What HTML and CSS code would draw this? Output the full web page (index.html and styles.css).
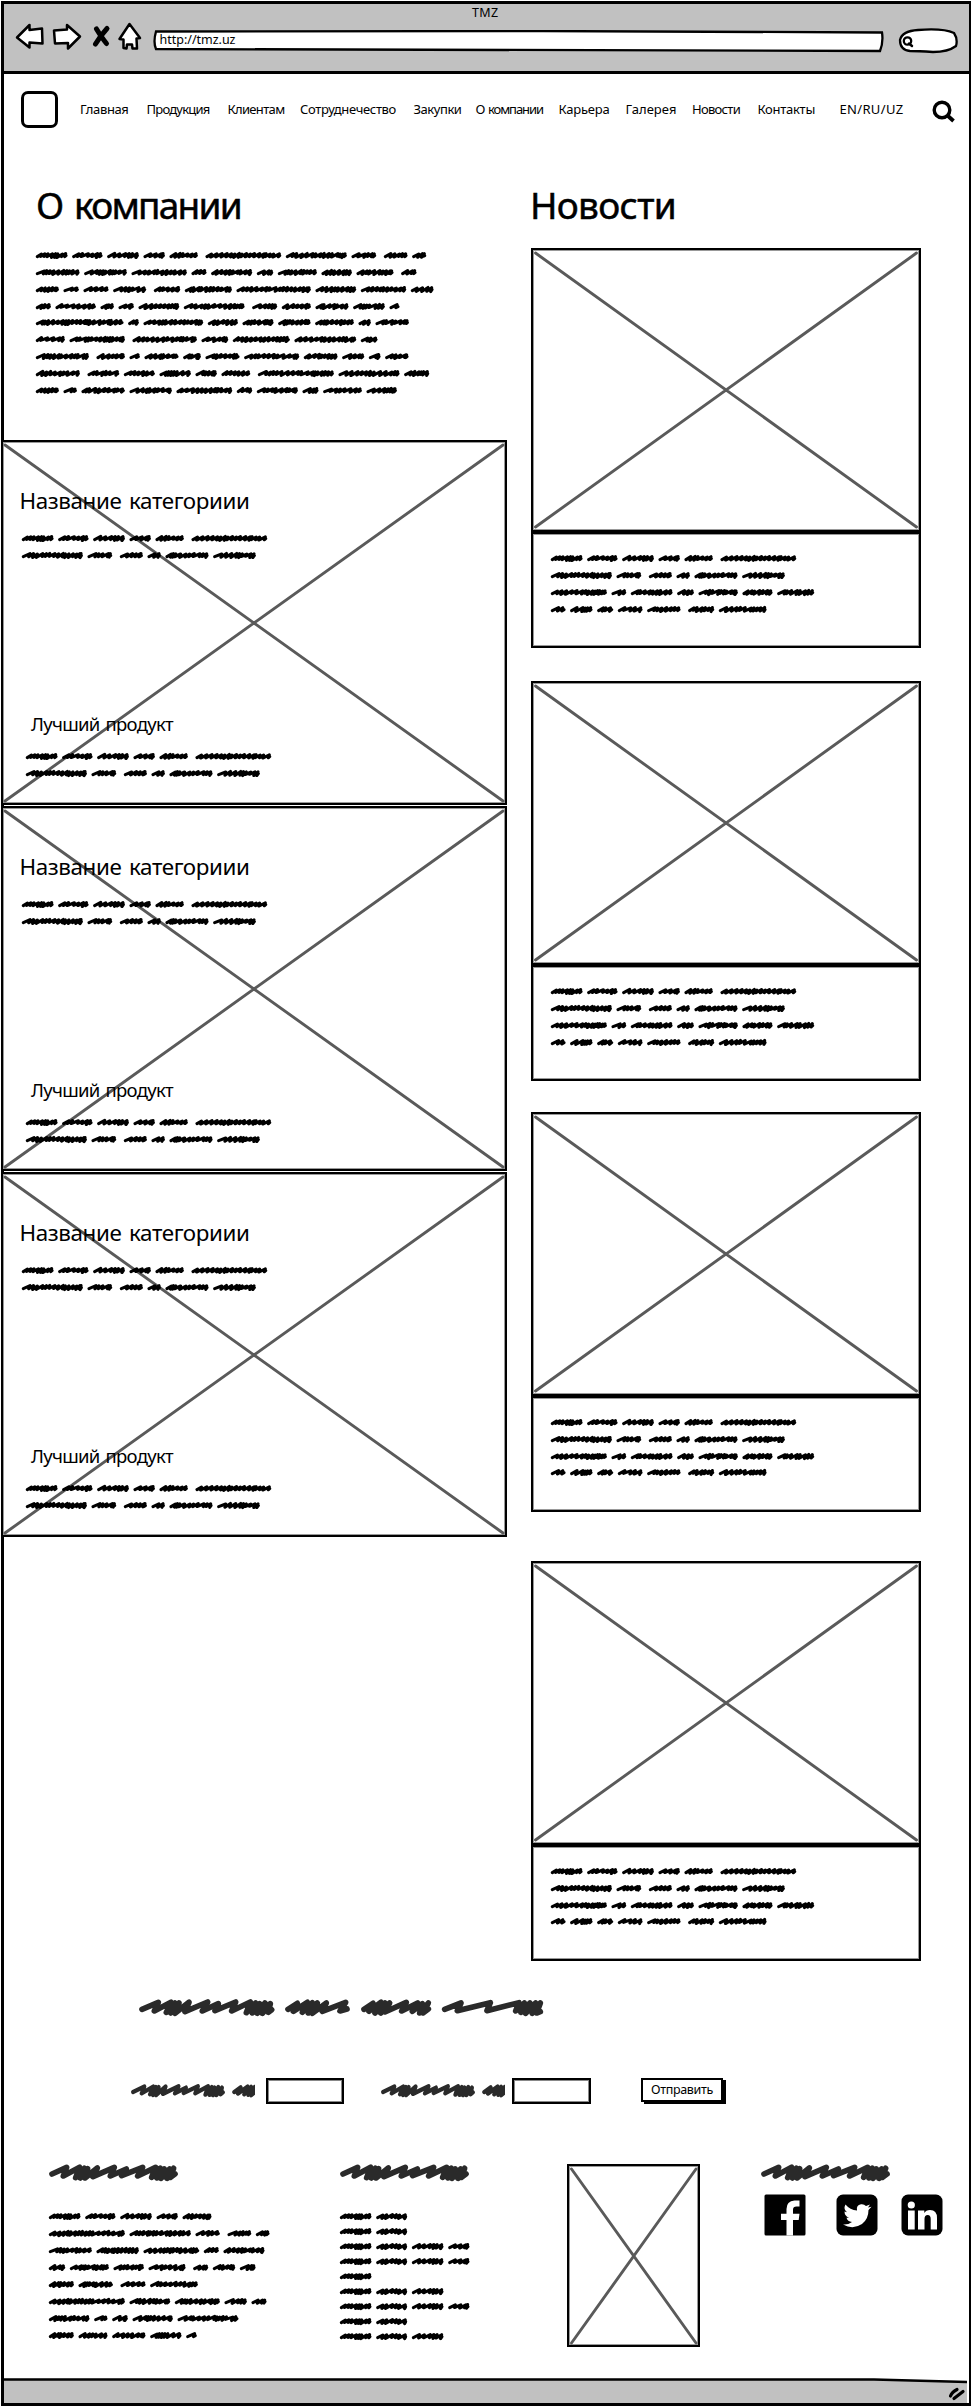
FILE: index.html
```html
<!DOCTYPE html>
<html lang="ru">
<head>
<meta charset="utf-8">
<title>TMZ</title>
<link rel="stylesheet" href="styles.css">
</head>
<body>
<svg class="defs" width="0" height="0">
  <defs>
    <path id="w1" d="M9 31L58 10L46 36L96 10L82 40L108 12L95 42L120 12L108 43L150 10L138 38L206 9L190 36L238 14L228 35L290 9L278 36L334 9L322 41L350 12L340 42L362 14L355 43L378 12L370 43L394 14L388 40L398 32"/>
    <path id="w2" d="M447 31L475 13L463 37L505 10L490 40L520 11L508 42L535 12L520 43L562 12L550 37L620 10L603 36L624 30"/>
    <path id="w3" d="M675 31L702 13L690 37L726 10L708 42L738 12L725 42L752 12L738 39L802 10L788 36L836 12L820 37L850 14L842 42L868 12L852 42L868 30"/>
    <path id="w4" d="M917 31L966 12L955 35L1054 11L1044 35L1140 11L1130 36L1156 12L1146 40L1173 12L1160 43L1190 12L1180 43L1204 12L1193 42L1204 38"/>
    <path id="head" d="M9 30L53 10L43 36L92 10L80 41L106 13L94 42L116 14L108 42L145 12L132 38L196 10L184 36L232 15L218 35L281 10L266 36L320 10L308 40L334 13L324 42L346 15L336 43L362 15L354 43L374 13L364 40L378 30"/>
  </defs>
</svg>
<div class="window">
  <header class="chrome">
    <div class="title"><span data-fit="26.5">TMZ</span></div>
    <div class="toolbar">
      <svg class="tools" width="130" height="32" viewBox="0 0 130 32">
        <g fill="#fff" stroke="#000" stroke-width="2.500" stroke-linejoin="round">
          <path d="M3 16.500L15.500 4V9L28 7.500L28.500 22.500L15.500 21.500V26.500Z"/>
          <path d="M40 9.500L53 8.500V4L66 15.500L54 27.500V22L41 22.500Z"/>
          <path d="M115.500 3L126 17L122.500 17.500L123 27.500H118.500L118 23.500H113L112.500 27.500L109.500 27V18.500L105.500 18Z"/>
        </g>
        <path d="M82.500 8Q88 17 92.500 22.500M93 7.500Q87 14 81.500 23" fill="none" stroke="#000" stroke-width="5" stroke-linecap="round"/>
      </svg>
      <div class="url">
        <svg width="731" height="23" viewBox="0 0 731 23"><path d="M3 1.500L390 1L729 2.500Q730.500 12 727 21L3 19Q0 12 3 1.500Z" fill="#fff" stroke="#000" stroke-width="2.300"/></svg>
        <span data-fit="76">http://tmz.uz</span>
      </div>
      <svg class="pill" width="61" height="26" viewBox="0 0 61 26">
        <path d="M2 12Q4 3 20 2Q45 0 56 5Q60 11 58 18Q50 24 35 24Q20 23 12 23Q2 22 2 12Z" fill="#fff" stroke="#000" stroke-width="2.300"/>
        <circle cx="9.500" cy="13" r="3.700" fill="none" stroke="#000" stroke-width="2.300"/>
        <path d="M11 15.500L14 18" stroke="#000" stroke-width="2.500" stroke-linecap="round"/>
      </svg>
    </div>
  </header>
  <nav class="nav">
    <span class="logo"></span>
    <ul class="links">
      <li><span data-fit="48.500">Главная</span></li>
      <li><span data-fit="63">Продукция</span></li>
      <li><span data-fit="57">Клиентам</span></li>
      <li><span data-fit="96">Сотруднечество</span></li>
      <li><span data-fit="48">Закупки</span></li>
      <li><span data-fit="67.500">О компании</span></li>
      <li><span data-fit="51">Карьера</span></li>
      <li><span data-fit="51">Галерея</span></li>
      <li><span data-fit="48">Новости</span></li>
      <li><span data-fit="57.500">Контакты</span></li>
      <li><span data-fit="64">EN/RU/UZ</span></li>
    </ul>
    <svg class="find" width="24" height="24" viewBox="0 0 24 24"><circle cx="10" cy="10" r="7.800" fill="none" stroke="#000" stroke-width="3.400"/><path d="M15.500 15.500L21.500 21" stroke="#000" stroke-width="3.800"/></svg>
  </nav>
  <main class="main">
    <div class="left">
      <section class="about">
        <h1><span data-fit="205">О компании</span></h1>
        <div class="scribble" data-lines="94 90 94 63 84 >226 182 73 >70 41|130 127 165 44 122 48 116 90 110 >45|68 45 74 98 >78 140 222 121 135 67|44 120 39 45 121 181 >74 86 98 94 29|262 31 178 89 92 96 115 36 99|86 165 >192 79 170 184 49|158 >84 30 101 52 101 164 100 65 34 69|131 >94 92 93 63 85 >227 182 74|68 39 129 126 166 45 122 47 115 90"></div>
      </section>
      <section class="panel">
        <svg class="cross" width="506" height="365" viewBox="0 0 506 365"><path d="M4 5L502 361M502 5L4 361"/></svg>
        <h2><span data-fit="230">Название категориии</span></h2>
        <div class="scribble cat" data-lines="94 90 94 63 84 >226|182 73 >68 39 128 127"></div>
        <h3><span data-fit="142">Лучший продукт</span></h3>
        <div class="scribble prod" data-lines="94 90 94 63 84 >226|182 73 >68 39 128 127"></div>
      </section>
      <section class="panel">
        <svg class="cross" width="506" height="365" viewBox="0 0 506 365"><path d="M4 5L502 361M502 5L4 361"/></svg>
        <h2><span data-fit="230">Название категориии</span></h2>
        <div class="scribble cat" data-lines="94 90 94 63 84 >226|182 73 >68 39 128 127"></div>
        <h3><span data-fit="142">Лучший продукт</span></h3>
        <div class="scribble prod" data-lines="94 90 94 63 84 >226|182 73 >68 39 128 127"></div>
      </section>
      <section class="panel">
        <svg class="cross" width="506" height="365" viewBox="0 0 506 365"><path d="M4 5L502 361M502 5L4 361"/></svg>
        <h2><span data-fit="230">Название категориии</span></h2>
        <div class="scribble cat" data-lines="94 90 94 63 84 >226|182 73 >68 39 128 127"></div>
        <h3><span data-fit="142">Лучший продукт</span></h3>
        <div class="scribble prod" data-lines="94 90 94 63 84 >226|182 73 >68 39 128 127"></div>
      </section>
    </div>
    <div class="news">
      <h1><span data-fit="146">Новости</span></h1>
      <article class="card">
        <div class="picture"><svg width="390" height="284" viewBox="0 0 390 284"><path d="M4.500 5L385.500 279M385.500 5L4.500 279"/></svg></div>
        <div class="note"><div class="scribble" data-lines="94 90 94 63 84 >226|182 73 >68 39 128 127|167 43 124 49 117 89 110|43 66 47 73 99 >77 142"></div></div>
      </article>
      <article class="card second">
        <div class="picture"><svg width="390" height="284" viewBox="0 0 390 284"><path d="M4.500 5L385.500 279M385.500 5L4.500 279"/></svg></div>
        <div class="note"><div class="scribble" data-lines="94 90 94 63 84 >226|182 73 >68 39 128 127|167 43 124 49 117 89 110|43 66 47 73 99 >77 142"></div></div>
      </article>
      <article class="card third">
        <div class="picture"><svg width="390" height="284" viewBox="0 0 390 284"><path d="M4.500 5L385.500 279M385.500 5L4.500 279"/></svg></div>
        <div class="note"><div class="scribble" data-lines="94 90 94 63 84 >226|182 73 >68 39 128 127|167 43 124 49 117 89 110|43 66 47 73 99 >77 142"></div></div>
      </article>
      <article class="card fourth">
        <div class="picture"><svg width="390" height="284" viewBox="0 0 390 284"><path d="M4.500 5L385.500 279M385.500 5L4.500 279"/></svg></div>
        <div class="note"><div class="scribble" data-lines="94 90 94 63 84 >226|182 73 >68 39 128 127|167 43 124 49 117 89 110|43 66 47 73 99 >77 142"></div></div>
      </article>
    </div>
  </main>
  <section class="subscribe">
    <svg class="marker" width="404" height="18" viewBox="0 0 1212 54"><use href="#w1"/><use href="#w2"/><use href="#w3"/><use href="#w4"/></svg>
    <form class="form">
      <svg class="marker" width="124" height="14" viewBox="0 0 537 54" preserveAspectRatio="none"><use href="#w1"/><use href="#w2"/></svg>
      <span class="input"></span>
      <svg class="marker label2" width="124" height="14" viewBox="0 0 537 54" preserveAspectRatio="none"><use href="#w1"/><use href="#w2"/></svg>
      <span class="input input2"></span>
      <button class="send" type="button"><span data-fit="62">Отправить</span></button>
    </form>
  </section>
  <footer class="footer">
    <div>
      <svg class="marker" width="130" height="18" viewBox="0 0 390 54"><use href="#head"/></svg>
      <div class="scribble" data-lines="94 90 94 63 86|227 183 72 >70 40|128 126 166 44 122|48 116 90 110 >44 66 46|74 102 >74 142|227 121 134 66 44|121 39 46 120 182|74 86 99 93 31"></div>
    </div>
    <div>
      <svg class="marker" width="130" height="18" viewBox="0 0 390 54"><use href="#head"/></svg>
      <div class="scribble tight" data-lines="94 92|94 92|94 92 94 63|94 92 94 63|94|94 92 94|94 92 94 63|94 92|94 92 94"></div>
    </div>
    <div class="poster"><svg width="133" height="183" viewBox="0 0 133 183"><path d="M4.500 5L129 179M129 5L4.500 179"/></svg></div>
    <div>
      <svg class="marker" width="130" height="18" viewBox="0 0 390 54"><use href="#head"/></svg>
      <div class="social">
        <svg width="42" height="42" viewBox="0 0 42 42"><rect x=".5" y=".5" width="41" height="41" rx="1.500"/><path fill="#fff" d="M22.500 41.500V26H17V19.800H22.500V15Q22.500 7 30.500 6.500H35.500V12.500H32.500Q29 12.500 29 15.800V19.800H35.500L34.700 26H29V41.500Z"/></svg>
        <svg width="42" height="42" viewBox="0 0 42 42"><rect x=".5" y=".5" width="41" height="41" rx="6.500"/><path fill="#fff" d="M7 30.500Q12 31 16 28Q11.500 27.500 10.500 23.800H13Q8.500 22 8.500 17.500L11 18.200Q7 15 9.500 10.500Q14 16 21 16.500Q20 11 25 10.200Q28 9.800 30 12L34 10.500L32 13.500L35.500 12.800L32.500 16Q32.500 25 26 30Q17 36 7 30.500Z"/></svg>
        <svg width="42" height="42" viewBox="0 0 42 42"><rect x=".5" y=".5" width="41" height="41" rx="6.500"/><circle cx="10.300" cy="11" r="3.600" fill="#fff"/><path fill="#fff" d="M7 16.500H13.700V35.500H7ZM17 16.500H23.300V19Q25 16 29 16Q36 16 36 24V35.500H29.700V25Q29.700 21 26.700 21Q23.500 21 23.500 25V35.500H17Z"/></svg>
      </div>
    </div>
  </footer>
  <div class="status">
    <svg width="963" height="26" viewBox="0 0 963 26"><path d="M0 1.500L700 1L870 1.500L964 4V26H0Z" fill="#c1c1c1"/><path d="M0 1.500L700 1.500L870 1.500L964 4" fill="none" stroke="#000" stroke-width="2.500"/><path d="M946.500 18Q948 14 953 11.500M950 20.500L959 13.500" fill="none" stroke="#000" stroke-width="3.200" stroke-linecap="round"/></svg>
  </div>
</div>
<script src="sketch.js"></script>
</body>
</html>
```

FILE: styles.css
```css
* { box-sizing: border-box; }
body {
  margin: 0;
  width: 971px;
  height: 2407px;
  background: #fff;
  color: #000;
  font-family: "Noto Sans", "Open Sans", sans-serif;
  overflow: hidden;
}
svg { display: block; flex: none; }
h1, h2, h3, ul { margin: 0; padding: 0; }
[data-fit] { display: inline-block; white-space: nowrap; word-spacing: .1em; }
.defs { position: absolute; }
.window {
  width: 969.5px;
  height: 2405px;
  margin: 1px 0 0 1px;
  border: 3px solid #000;
  border-right-width: 2.5px;
  display: flow-root;
}
.chrome { height: 70px; background: #c1c1c1; border-bottom: 3px solid #000; }
.title { height: 17px; line-height: 17px; font-size: 12.5px; padding-left: 468px; }
.toolbar { display: flex; align-items: flex-start; }
.tools { margin: 0 0 0 10px; }
.url { display: grid; margin: 9px 0 0 9px; width: 731px; }
.url > * { grid-area: 1 / 1; }
.url span { font-size: 12.5px; line-height: 20px; padding-left: 6.5px; justify-self: start; }
.pill { margin: 7px 0 0 14px; }

.nav { height: 70px; display: flex; align-items: center; }
.logo { width: 37px; height: 37px; border: 3px solid #000; border-radius: 7px; margin-left: 17px; }
.links {
  list-style: none;
  display: grid;
  grid-template-columns: 66.5px 81px 72.5px 113.5px 62px 83px 67px 66.5px 65.5px 82px 64px;
  width: 824px;
  margin-left: 22px;
  font-size: 13px;
  line-height: 20px;
}
.find { margin: 5px 0 0 28px; }

.main { display: grid; grid-template-columns: 507px 390px; column-gap: 23px; height: 1817.3px; margin-left: -3px; }
h1 { font-size: 37px; line-height: 50px; font-weight: 400; -webkit-text-stroke: .5px #000; height: 50px; }
.about { height: 296px; padding: 35.6px 0 0 35px; }
.about .scribble { margin-top: 17.2px; }
.news { padding-top: 35.6px; }
.news h1 { margin-left: -1px; height: 68.7px; }

.panel {
  position: relative;
  width: 506px;
  height: 365px;
  margin-bottom: 1px;
  border: 2px solid #000;
  box-shadow: inset 0 0 0 1px #999;
  padding-top: 44.2px;
}
.cross { position: absolute; left: -2px; top: -2px; }
.cross path, .picture path, .poster path { fill: none; stroke: #5a5a5a; stroke-width: 2.9; stroke-linecap: round; }
.panel h2, .panel h3, .panel .scribble { position: relative; }
h2 { font-size: 22.4px; line-height: 30px; font-weight: 400; padding-left: 16.5px; height: 30px; }
h3 { font-size: 18.5px; line-height: 26px; font-weight: 400; padding-left: 28px; margin-top: 147.8px; height: 26px; }
.cat { margin: 13.7px 0 0 19.4px; }
.prod { margin: 10.7px 0 0 23.4px; }

.card { height: 400px; }
.second { margin-top: 33.2px; }
.third { margin-top: 30.8px; }
.fourth { margin-top: 49px; }
.picture { height: 284px; border: 2px solid #000; box-shadow: inset 0 0 0 1px #999; }
.picture svg { margin: -2px; }
.note { height: 116px; border: 2px solid #000; box-shadow: inset 0 0 0 1px #999; padding: 15.5px 0 0 17.5px; }

.scribble svg { height: 16.92px; overflow: visible; fill: none; stroke: #000; stroke-width: 9.2; stroke-linecap: round; stroke-linejoin: round; }
.scribble.tight svg { height: 15px; }
.marker { overflow: visible; fill: none; stroke: #2a2a2a; stroke-width: 17; stroke-linecap: round; stroke-linejoin: round; }

.subscribe { padding: 38px 0 0 134.5px; height: 202.7px; }
.form { display: flex; align-items: center; margin: 60px 0 0 -8px; height: 27px; }
.form .marker { overflow: hidden; }
.input { width: 78.5px; height: 26.5px; border: 2px solid #000; box-shadow: inset 0 0 0 1px #888; margin-left: 11px; }
.label2 { margin-left: 37px; }
.input2 { margin-left: 7px; }
.send {
  width: 82px; height: 24px; margin: -1px 0 0 50.5px; padding: 0;
  border: 2px solid #000; background: #fff; color: #000; box-shadow: 3px 2px 0 #000;
  font: 12.5px/18px "Noto Sans", sans-serif;
}

.footer { display: grid; grid-template-columns: 291px 227px 194px 190px; padding-left: 44.5px; height: 214.5px; }
.footer .scribble { margin: 26.5px 0 0 .5px; }
.footer .scribble.tight { margin-top: 27.5px; }
.poster { width: 133px; height: 183px; border: 2px solid #000; box-shadow: inset 0 0 0 1px #999; margin-top: .5px; }
.poster svg { margin: -2px; }
.social { display: flex; margin: 12.5px 0 0 3px; }
.social svg + svg { margin-left: 30px; }
.social svg + svg + svg { margin-left: 23px; }
.status { height: 24.5px; overflow: hidden; }
```

FILE: sketch.js
```js
// Draws the hand-scribbled placeholder copy. Each number is a word's width in
// thirds of a pixel; ">" marks the wider gap after a sentence.
function wordPath(x0, width, seed) {
  var s = seed * 7919 + Math.round(width) * 104729;
  function rnd() { s = (s * 1103515245 + 12345) % 2147483648; return s / 2147483648; }
  var end = x0 + width - 4;
  var x = x0 + 4;
  var d = 'M' + x + ' 29';
  while (x < end - 7) {
    var reach = 12 + rnd() * 10;
    var top = Math.min(x + reach, end - 1);
    d += 'L' + top.toFixed(1) + ' ' + (19.5 + rnd() * 2).toFixed(1);
    x = Math.min(top - 4 + rnd() * 2, end);
    d += 'L' + x.toFixed(1) + ' ' + (28 + rnd() * 4).toFixed(1);
    if (rnd() < .5) x -= 3;
  }
  return d + 'L' + end + ' 26';
}
document.querySelectorAll('.scribble').forEach(function (box) {
  box.innerHTML = box.dataset.lines.split('|').map(function (line) {
    var x = 0, d = '';
    line.split(' ').forEach(function (word, i) {
      var wide = word[0] === '>';
      var w = Number(word.replace('>', ''));
      if (i) x += wide ? 24 : 15;
      d += wordPath(x, w, i + 1);
      x += w;
    });
    var width = Math.ceil(x / 3);
    return '<svg width="' + width + '" viewBox="0 0 ' + width * 3 + ' 51" preserveAspectRatio="xMinYMid slice"><path d="' + d + '"/></svg>';
  }).join('');
});
// Spaces the lettering out to its drawn width.
document.querySelectorAll('[data-fit]').forEach(function (el) {
  var cs = getComputedStyle(el);
  var natural = el.getBoundingClientRect().width - parseFloat(cs.paddingLeft);
  el.style.letterSpacing = ((Number(el.dataset.fit) - natural) / el.textContent.length) + 'px';
});
```
